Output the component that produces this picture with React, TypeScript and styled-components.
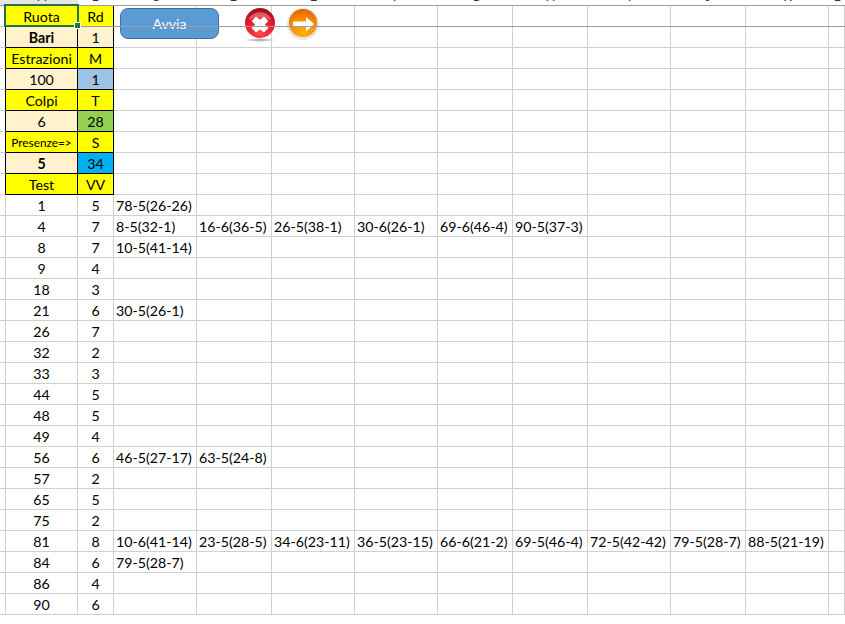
import React from "react";
import styled, { createGlobalStyle } from "styled-components";

const GlobalStyle = createGlobalStyle`
	html, body {
		margin: 0;
		padding: 0;
		background: #fff;
		overflow: hidden;
	}
`;

const COLS = "6px 72px 36px 83px 75px 83px 83px 75px 75px 83px 75px 83px 16px";
const LETTERS = ["", "A", "B", "C", "D", "E", "F", "G", "H", "I", "J", "K", "L"];

const Sheet = styled.div`
	position: relative;
	width: 845px;
	height: 624px;
	overflow: hidden;
	font-family: Lato, "Liberation Sans", sans-serif;
	font-size: 14.2px;
	color: #000;
`;
const HeaderStrip = styled.div`
	display: grid;
	grid-template-columns: ${COLS};
	height: 5px;
	border-bottom: 1px solid #9c9c9c;
	background: #fff;
`;
const HeaderCell = styled.div<{ $active?: boolean }>`
	height: 5px;
	overflow: hidden;
	text-align: center;
	font-size: 13px;
	line-height: 0;
	color: #333;
	background: ${(p) => (p.$active ? "#e6e6e6" : "transparent")};
`;
const HeaderLetter = styled.span`
	display: block;
	margin-top: -4px;
`;
const Row = styled.div`
	display: grid;
	grid-template-columns: ${COLS};
	height: 21px;
`;
const Cell = styled.div<{
	$bg?: string;
	$dark?: boolean;
	$edge?: boolean;
	$bold?: boolean;
	$center?: boolean;
	$small?: boolean;
}>`
	box-sizing: border-box;
	height: 21px;
	line-height: 22px;
	white-space: nowrap;
	overflow: visible;
	padding-left: ${(p) => (p.$center ? "0" : "2px")};
	text-align: ${(p) => (p.$center ? "center" : "left")};
	background: ${(p) => p.$bg || "transparent"};
	font-weight: ${(p) => (p.$bold ? 700 : 400)};
	font-size: ${(p) => (p.$small ? "11.8px" : "14.2px")};
	border-right: 1px solid ${(p) => (p.$dark || p.$edge ? "#000" : "#d0d0d0")};
	border-bottom: 1px solid ${(p) => (p.$dark ? "#000" : "#d0d0d0")};
`;
const FreezeLine = styled.div`
	position: absolute;
	left: 4px;
	right: 0;
	top: 26px;
	height: 1px;
	background: #9c9c9c;
	z-index: 5;
`;
const ActiveCell = styled.div`
	position: absolute;
	left: 4px;
	top: 4px;
	width: 75px;
	height: 23px;
	box-sizing: border-box;
	border: 2px solid #217346;
	z-index: 6;
	&::after {
		content: "";
		position: absolute;
		right: -4px;
		bottom: -4px;
		width: 5px;
		height: 5px;
		background: #217346;
		border: 1px solid #fff;
	}
`;
const RunButton = styled.div`
	position: absolute;
	left: 120px;
	top: 8px;
	width: 99px;
	height: 31px;
	box-sizing: border-box;
	border: 1px solid #41719c;
	border-radius: 8px;
	background: #5b9bd5;
	color: #fff;
	text-align: center;
	font-size: 14.2px;
	line-height: 29px;
`;
const IconSlot = styled.div<{ $left: number }>`
	position: absolute;
	left: ${(p) => p.$left}px;
	top: 7px;
	width: 34px;
	height: 36px;
`;

const CloseIcon = () => (
	<svg width="34" height="36" viewBox="0 0 34 36">
		<defs>
			<radialGradient id="redBall" cx="0.5" cy="0.8" r="0.75">
				<stop offset="0" stopColor="#ff4a55" />
				<stop offset="0.6" stopColor="#ee1c2c" />
				<stop offset="1" stopColor="#a50d1a" />
			</radialGradient>
			<radialGradient id="shadow" cx="0.5" cy="0.5" r="0.5">
				<stop offset="0" stopColor="#777" stopOpacity="0.75" />
				<stop offset="1" stopColor="#777" stopOpacity="0" />
			</radialGradient>
		</defs>
		<ellipse cx="15" cy="33" rx="16" ry="2" fill="url(#shadow)" />
		<circle cx="15" cy="16" r="15" fill="url(#redBall)" />
		<path d="M3.5 13 A12 11 0 0 1 26.5 13 Q15 8 3.5 13 Z" fill="#fff" opacity="0.3" />
		<path
			d="M11 10 L15 13 L19 10 L23 14 L19.5 17.5 L23 21 L19 25 L15 22 L11 25 L7 21 L10.5 17.5 L7 14 Z"
			fill="#fff"
			stroke="#fff"
			strokeWidth="0.8"
			strokeLinejoin="round"
		/>
	</svg>
);

const NextIcon = () => (
	<svg width="34" height="36" viewBox="0 0 34 36">
		<defs>
			<radialGradient id="orangeBall" cx="0.5" cy="0.85" r="0.85">
				<stop offset="0" stopColor="#ffb000" />
				<stop offset="0.6" stopColor="#fb8c00" />
				<stop offset="1" stopColor="#e06400" />
			</radialGradient>
		</defs>
		<circle cx="16" cy="17" r="16" fill="#e4e4e4" />
		<circle cx="16" cy="16" r="14" fill="url(#orangeBall)" />
		<path d="M6 14.5 H19 V10 L27 17 L19 24.5 V19.5 H6 Z" fill="#fff" />
	</svg>
);

type Side = { text: string; bg: string; bold?: boolean; small?: boolean };

const sidePairs: [Side, Side][] = [
	[{ text: "Ruota", bg: "#ffff00" }, { text: "Rd", bg: "#ffff00" }],
	[{ text: "Bari", bg: "#fff2cc", bold: true }, { text: "1", bg: "#fff2cc" }],
	[{ text: "Estrazioni", bg: "#ffff00" }, { text: "M", bg: "#ffff00" }],
	[{ text: "100", bg: "#fff2cc" }, { text: "1", bg: "#9dc3e6" }],
	[{ text: "Colpi", bg: "#ffff00" }, { text: "T", bg: "#ffff00" }],
	[{ text: "6", bg: "#fff2cc" }, { text: "28", bg: "#92d050" }],
	[{ text: "Presenze=>", bg: "#ffff00", small: true }, { text: "S", bg: "#ffff00" }],
	[{ text: "5", bg: "#fff2cc", bold: true }, { text: "34", bg: "#00b0f0" }],
	[{ text: "Test", bg: "#ffff00" }, { text: "VV", bg: "#ffff00" }],
];

const dataRows: [string, string, string[]][] = [
	["1", "5", ["78-5(26-26)"]],
	["4", "7", ["8-5(32-1)", "16-6(36-5)", "26-5(38-1)", "30-6(26-1)", "69-6(46-4)", "90-5(37-3)"]],
	["8", "7", ["10-5(41-14)"]],
	["9", "4", []],
	["18", "3", []],
	["21", "6", ["30-5(26-1)"]],
	["26", "7", []],
	["32", "2", []],
	["33", "3", []],
	["44", "5", []],
	["48", "5", []],
	["49", "4", []],
	["56", "6", ["46-5(27-17)", "63-5(24-8)"]],
	["57", "2", []],
	["65", "5", []],
	["75", "2", []],
	["81", "8", ["10-6(41-14)", "23-5(28-5)", "34-6(23-11)", "36-5(23-15)", "66-6(21-2)", "69-5(46-4)", "72-5(42-42)", "79-5(28-7)", "88-5(21-19)"]],
	["84", "6", ["79-5(28-7)"]],
	["86", "4", []],
	["90", "6", []],
];

const OTHER = 10;

const App = () => {
	return (
		<Sheet>
			<GlobalStyle />
			<HeaderStrip>
				{LETTERS.map((letter, i) => (
					<HeaderCell key={i} $active={i < 2}>
						<HeaderLetter>{letter}</HeaderLetter>
					</HeaderCell>
				))}
			</HeaderStrip>
			{sidePairs.map(([a, b], r) => (
				<Row key={r}>
					<Cell $edge />
					<Cell $dark $center $bg={a.bg} $bold={a.bold} $small={a.small}>
						{a.text}
					</Cell>
					<Cell $dark $center $bg={b.bg}>
						{b.text}
					</Cell>
					{Array.from({ length: OTHER }).map((_, i) => (
						<Cell key={i} />
					))}
				</Row>
			))}
			{dataRows.map(([n, v, hits], r) => (
				<Row key={r}>
					<Cell />
					<Cell $center>{n}</Cell>
					<Cell $center>{v}</Cell>
					{Array.from({ length: OTHER }).map((_, i) => (
						<Cell key={i}>{hits[i]}</Cell>
					))}
				</Row>
			))}
			<FreezeLine />
			<ActiveCell />
			<RunButton>Avvia</RunButton>
			<IconSlot $left={245}>
				<CloseIcon />
			</IconSlot>
			<IconSlot $left={287}>
				<NextIcon />
			</IconSlot>
		</Sheet>
	);
};

export default App;
